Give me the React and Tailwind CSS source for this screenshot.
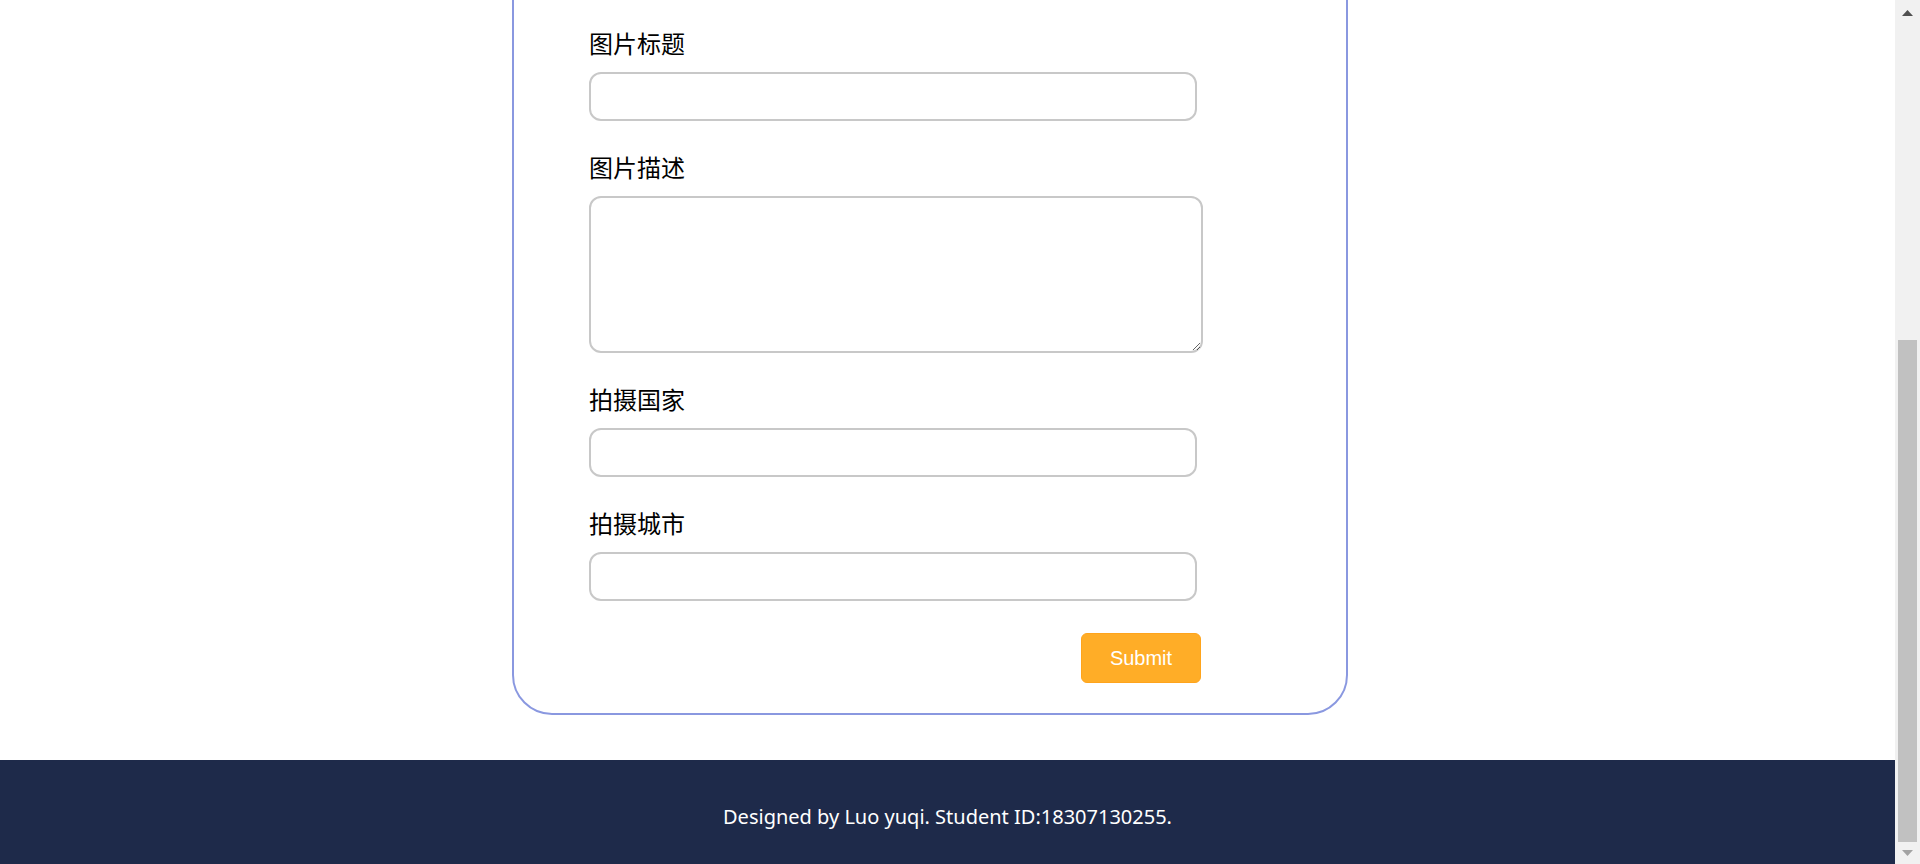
import React from "react";

const cjk = { fontFamily: '"Microsoft YaHei", "Noto Sans CJK SC", sans-serif' };

function Field({ label, first, textarea }) {
  return (
    <div className={first ? "" : "mt-[28px]"}>
      <label
        className="block text-[24px] leading-[36px] text-black font-['Noto_Sans_CJK_SC',sans-serif]"
      >
        {label}
      </label>
      {textarea ? (
        <textarea className="mt-[11px] block w-[614px] h-[157px] rounded-[12px] border-2 border-[#c8c8c8] bg-white outline-none" />
      ) : (
        <input
          type="text"
          className="mt-[11px] block w-[608px] h-[49px] rounded-[12px] border-2 border-[#c8c8c8] bg-white outline-none"
        />
      )}
    </div>
  );
}

export default function App() {
  return (
    <div className="flex h-[864px] w-[1920px] overflow-hidden bg-white">
      <div className="flex w-[1895px] flex-col justify-end overflow-hidden">
        <div className="shrink-0 pb-[45px]">
          <div className="ml-[512px] w-[836px] rounded-b-[40px] rounded-t-[40px] border-2 border-[#8a98e0] pl-[75px] pt-[120px] pb-[30px]">
            <div className="w-[612px]">
              <Field label="图片标题" first />
              <Field label="图片描述" textarea />
              <Field label="拍摄国家" />
              <Field label="拍摄城市" />
              <div className="mt-[32px] flex justify-end">
                <button className="h-[50px] w-[120px] rounded-[6px] border border-[#ffa41c] bg-[#ffad27] text-[20px] text-white font-['Liberation_Sans',Arial,sans-serif]">
                  Submit
                </button>
              </div>
            </div>
          </div>
        </div>
        <footer className="h-[104px] shrink-0 bg-[#1e2a4a] pt-[42px] text-center">
          <p className="text-[20px] leading-[30px] text-white font-['Noto_Sans',sans-serif]">
            Designed by Luo yuqi. Student ID:18307130255.
          </p>
        </footer>
      </div>
      <div className="flex h-[864px] w-[25px] shrink-0 flex-col bg-[#f1f1f1]">
        <div className="flex h-[25px] shrink-0 items-center justify-center">
          <svg width="11" height="6" viewBox="0 0 11 6">
            <polygon points="5.5,0 11,6 0,6" fill="#505050" />
          </svg>
        </div>
        <div className="h-[315px] shrink-0" />
        <div className="mx-[3px] h-[502px] shrink-0 bg-[#c1c1c1]" />
        <div className="flex flex-1 items-center justify-center">
          <svg width="11" height="6" viewBox="0 0 11 6">
            <polygon points="0,0 11,0 5.5,6" fill="#a3a3a3" />
          </svg>
        </div>
      </div>
    </div>
  );
}
